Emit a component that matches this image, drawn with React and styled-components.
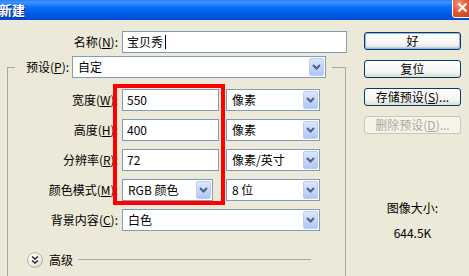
import styled, { createGlobalStyle } from "styled-components";

const GlobalStyle = createGlobalStyle`
  html, body {
    margin: 0;
    padding: 0;
    background: #ece9d8;
  }
  body {
    font-family: "Noto Sans CJK SC", "DejaVu Sans", sans-serif;
    font-size: 12px;
    color: #000;
  }
`;

const Window = styled.div`
  position: relative;
  width: 469px;
  height: 276px;
  overflow: hidden;
  background: #ece9d8;
`;

const TitleBar = styled.div`
  height: 20px;
  display: flex;
  align-items: center;
  justify-content: space-between;
  background: linear-gradient(
    #2b7bf4 0%,
    #3d95ff 10%,
    #2a88fd 20%,
    #0f72f5 35%,
    #0263ec 55%,
    #0058e4 75%,
    #0052dc 90%,
    #0046c8 100%
  );
`;

const Title = styled.span`
  color: #fff;
  font-weight: bold;
  font-size: 13px;
  line-height: 20px;
  margin-left: -1px;
  text-shadow: 1px 1px 0 #0b2c8a;
`;

const CloseButton = styled.div`
  align-self: flex-start;
  margin-top: -3px;
  margin-right: -4px;
  width: 21px;
  height: 21px;
  box-sizing: border-box;
  border: 1px solid #fff;
  border-radius: 3px;
  background: radial-gradient(circle at 30% 30%, #f0967a 0%, #e2582f 45%, #c43a14 100%);
  display: flex;
  align-items: center;
  justify-content: center;
`;

const Body = styled.div`
  display: flex;
`;

const Main = styled.div`
  width: 347px;
  padding-top: 11px;
`;

const NameRow = styled.div`
  display: grid;
  grid-template-columns: 118px 225px;
  column-gap: 4px;
  align-items: center;
`;

const Label = styled.label`
  text-align: right;
  line-height: 16px;
  white-space: nowrap;
`;

const Key = styled.span`
  text-decoration: underline;
`;

const TextBox = styled.div`
  height: 22px;
  box-sizing: border-box;
  border: 1px solid #7f9db9;
  background: #fff;
  padding-left: 4px;
  display: flex;
  align-items: center;
  line-height: 16px;
  width: ${({ $w }) => ($w ? `${$w}px` : "auto")};
`;

const Caret = styled.span`
  display: inline-block;
  width: 1px;
  height: 14px;
  margin-left: 2px;
  background: #000;
`;

const Group = styled.fieldset`
  margin: 3px 0 0 7px;
  padding: 0;
  width: 339px;
  height: 230px;
  box-sizing: border-box;
  border: 1px solid #aca899;
  border-bottom: none;
`;

const Legend = styled.legend`
  margin-left: 7px;
  padding: 0 6px 0 11px;
  display: flex;
  align-items: center;
  gap: 3px;
`;

const Select = styled.div`
  height: 22px;
  box-sizing: border-box;
  border: 1px solid #7f9db9;
  background: #fff;
  padding: 1px 1px 1px 5px;
  display: flex;
  align-items: center;
  line-height: 16px;
  width: ${({ $w }) => `${$w}px`};
  grid-column: ${({ $span }) => ($span ? "2 / span 2" : "auto")};
  justify-self: ${({ $end }) => ($end ? "end" : "start")};
`;

const SelectText = styled.span`
  flex: 1;
  white-space: nowrap;
`;

const ArrowButton = styled.span`
  width: 15px;
  height: 18px;
  box-sizing: border-box;
  border: 1px solid #b9cdf8;
  border-radius: 2px;
  background: linear-gradient(#dce6fd, #c3d4fb 60%, #b2c6f4);
  display: flex;
  align-items: center;
  justify-content: center;
`;

const Fields = styled.div`
  margin-top: 11px;
  display: grid;
  grid-template-columns: 110px 97px 97px;
  grid-auto-rows: 22px;
  column-gap: 4px;
  row-gap: 8px;
  align-items: center;
`;

const Advanced = styled.div`
  margin-top: 20px;
  padding-left: 19px;
  display: flex;
  align-items: center;
  gap: 6px;
`;

const AdvancedRule = styled.span`
  flex: 0 0 233px;
  margin-left: -1px;
  height: 1px;
  background: #aca899;
`;

const Side = styled.div`
  margin-left: 17px;
  width: 97px;
  padding-top: 12px;
  display: flex;
  flex-direction: column;
  gap: 10px;
`;

const Button = styled.div`
  height: 18px;
  box-sizing: border-box;
  border: 1px solid ${({ $disabled }) => ($disabled ? "#c9c7ba" : "#003c74")};
  border-radius: 3px;
  background: ${({ $disabled }) =>
    $disabled ? "#f5f4ea" : "linear-gradient(#ffffff, #f4f4f0 70%, #dedbd0)"};
  color: ${({ $disabled }) => ($disabled ? "#aca899" : "#000")};
  box-shadow: ${({ $default }) =>
    $default ? "inset 0 0 0 1px #9fb6e6, inset 0 -1px 0 1px #c0d0f0" : "none"};
  display: flex;
  align-items: center;
  justify-content: center;
  line-height: 16px;
  white-space: nowrap;
`;

const SizeInfo = styled.div`
  margin-top: 56px;
  display: flex;
  flex-direction: column;
  align-items: center;
  gap: 9px;
  line-height: 16px;
`;

const Highlight = styled.div`
  position: absolute;
  left: 113px;
  top: 84px;
  width: 112px;
  height: 121px;
  box-sizing: border-box;
  border: 4px solid #ff0000;
  pointer-events: none;
`;

function Chevron() {
  return (
    <svg width="9" height="6" viewBox="0 0 9 6">
      <path d="M1 1 L4.5 4.5 L8 1" fill="none" stroke="#4d6185" strokeWidth="2" />
    </svg>
  );
}

function Dropdown({ value, width, span, end }) {
  return (
    <Select $w={width} $span={span} $end={end}>
      <SelectText>{value}</SelectText>
      <ArrowButton>
        <Chevron />
      </ArrowButton>
    </Select>
  );
}

function FieldLabel({ text, k }) {
  return (
    <Label>
      {text}(<Key>{k}</Key>):
    </Label>
  );
}

function ExpandIcon() {
  return (
    <svg width="16" height="16" viewBox="0 0 16 16">
      <defs>
        <radialGradient id="orb" cx="40%" cy="35%" r="70%">
          <stop offset="0%" stopColor="#ffffff" />
          <stop offset="70%" stopColor="#ecebe4" />
          <stop offset="100%" stopColor="#c8c6bc" />
        </radialGradient>
      </defs>
      <circle cx="8" cy="8" r="7.5" fill="url(#orb)" stroke="#b8b6a8" />
      <path d="M5 4.5 L8 7 L11 4.5 M5 8.5 L8 11 L11 8.5" fill="none" stroke="#222" strokeWidth="1.4" />
    </svg>
  );
}

export default function App() {
  return (
    <>
      <GlobalStyle />
      <Window>
        <TitleBar>
          <Title>新建</Title>
          <CloseButton>
            <svg width="11" height="11" viewBox="0 0 11 11">
              <path d="M1.5 1.5 L9.5 9.5 M9.5 1.5 L1.5 9.5" stroke="#fff" strokeWidth="2.2" />
            </svg>
          </CloseButton>
        </TitleBar>
        <Body>
          <Main>
            <NameRow>
              <FieldLabel text="名称" k="N" />
              <TextBox>
                宝贝秀
                <Caret />
              </TextBox>
            </NameRow>
            <Group>
              <Legend>
                <FieldLabel text="预设" k="P" />
                <Dropdown value="自定" width={254} />
              </Legend>
              <Fields>
                <FieldLabel text="宽度" k="W" />
                <TextBox $w={97}>550</TextBox>
                <Dropdown value="像素" width={94} end />

                <FieldLabel text="高度" k="H" />
                <TextBox $w={97}>400</TextBox>
                <Dropdown value="像素" width={94} end />

                <FieldLabel text="分辨率" k="R" />
                <TextBox $w={97}>72</TextBox>
                <Dropdown value="像素/英寸" width={94} end />

                <FieldLabel text="颜色模式" k="M" />
                <Dropdown value="RGB 颜色" width={91} />
                <Dropdown value="8 位" width={94} end />

                <FieldLabel text="背景内容" k="C" />
                <Dropdown value="白色" width={198} span />
              </Fields>
              <Advanced>
                <ExpandIcon />
                <span>高级</span>
                <AdvancedRule />
              </Advanced>
            </Group>
          </Main>
          <Side>
            <Button $default>好</Button>
            <Button>复位</Button>
            <Button>
              存储预设(<Key>S</Key>)...
            </Button>
            <Button $disabled>
              删除预设(<Key>D</Key>)...
            </Button>
            <SizeInfo>
              <span>图像大小:</span>
              <span>644.5K</span>
            </SizeInfo>
          </Side>
        </Body>
        <Highlight />
      </Window>
    </>
  );
}
